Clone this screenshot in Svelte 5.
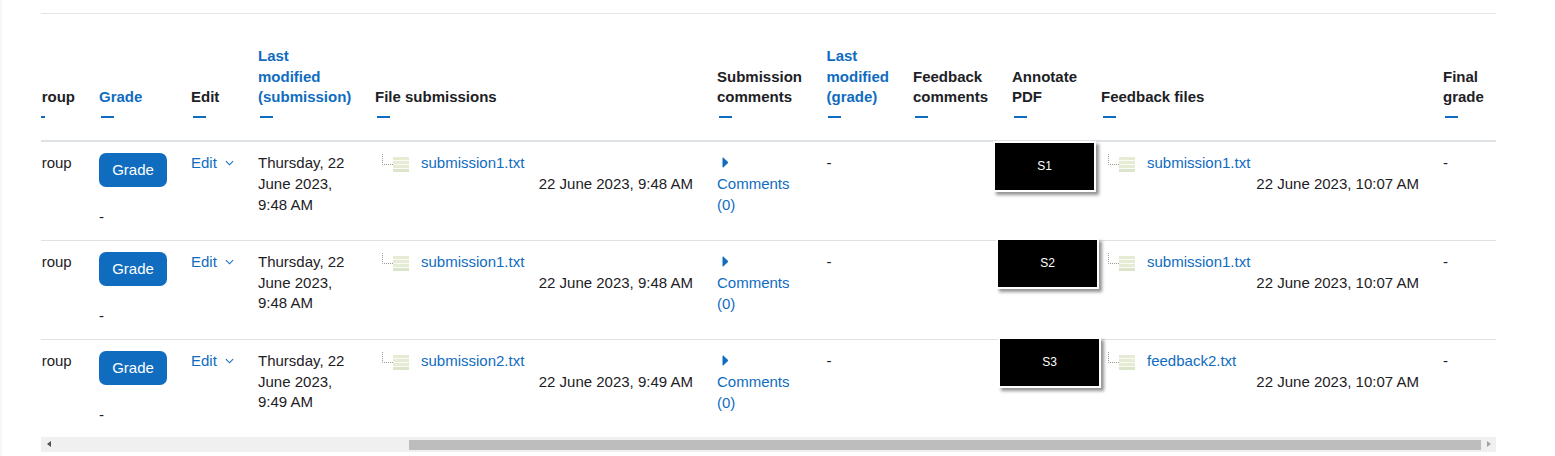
<script>
  const rows = [
    { mod: "9:48 AM", file: "submission1.txt", time: "9:48 AM", label: "S1", shift: 0, top: -1, feedback: "submission1.txt" },
    { mod: "9:48 AM", file: "submission1.txt", time: "9:48 AM", label: "S2", shift: 3, top: -3, feedback: "submission1.txt" },
    { mod: "9:49 AM", file: "submission2.txt", time: "9:49 AM", label: "S3", shift: 5, top: -3, feedback: "feedback2.txt" }
  ];
  const widths = [68, 92, 67, 117, 342, 109.5, 86.5, 99, 89, 342, 80];
</script>

{#snippet collapse()}
  <span class="collapse"></span>
{/snippet}

{#snippet fileEntry(name, date)}
  <div class="tree">
    <svg class="tree-icon" viewBox="0 0 28 20" width="28" height="20" aria-hidden="true">
      <path d="M0.5 0v10.5H11" fill="none" stroke="#999" stroke-dasharray="1 1" />
      <rect x="11" y="3" width="16" height="15" fill="#e6ecd3" />
      <path d="M11 6.5h16M11 10.5h16M11 14.5h16" stroke="#fff" stroke-opacity="0.8" />
      <rect x="11" y="15" width="16" height="3" fill="#dbe5c9" />
    </svg>
    <a href="#top">{name}</a>
  </div>
  <div class="file-date">{date}</div>
{/snippet}

<div class="page">
  <div class="panel">
    <div class="scroller">
      <table>
        <colgroup>
          {#each widths as w}
            <col style="width: {w}px" />
          {/each}
        </colgroup>
        <thead>
          <tr>
            <th>Group{@render collapse()}</th>
            <th><a href="#top">Grade</a>{@render collapse()}</th>
            <th>Edit{@render collapse()}</th>
            <th><a href="#top">Last<br />modified<br />(submission)</a>{@render collapse()}</th>
            <th>File submissions{@render collapse()}</th>
            <th>Submission<br />comments{@render collapse()}</th>
            <th><a href="#top">Last<br />modified<br />(grade)</a>{@render collapse()}</th>
            <th>Feedback<br />comments{@render collapse()}</th>
            <th>Annotate<br />PDF{@render collapse()}</th>
            <th>Feedback files{@render collapse()}</th>
            <th>Final<br />grade{@render collapse()}</th>
          </tr>
        </thead>
        <tbody>
          {#each rows as row}
            <tr>
              <td>Group</td>
              <td>
                <button>Grade</button>
                <div class="grade-value">-</div>
              </td>
              <td>
                <a href="#top" class="edit">Edit
                  <svg viewBox="0 0 10 6" width="9" height="6" aria-hidden="true">
                    <path d="M1 1l4 4 4-4" fill="none" stroke="#0f6cbf" stroke-width="1.2" />
                  </svg>
                </a>
              </td>
              <td>Thursday, 22<br />June 2023,<br />{row.mod}</td>
              <td>{@render fileEntry(row.file, `22 June 2023, ${row.time}`)}</td>
              <td>
                <svg class="arrow" viewBox="0 0 7 11" width="7" height="11" aria-hidden="true">
                  <path d="M1 0.8L6 5.5L1 10.2Z" fill="#0f6cbf" stroke="#0f6cbf" stroke-linejoin="round" />
                </svg>
                <a href="#top" class="comments">Comments (0)</a>
              </td>
              <td>-</td>
              <td></td>
              <td class="annotate">
                <div class="thumb" style="margin-left: {row.shift}px; top: {row.top}px">{row.label}</div>
              </td>
              <td>{@render fileEntry(row.feedback, "22 June 2023, 10:07 AM")}</td>
              <td>-</td>
            </tr>
          {/each}
        </tbody>
      </table>
    </div>
    <div class="scrollbar">
      <span class="step left"></span>
      <div class="track"><div class="bar"></div></div>
      <span class="step right"></span>
    </div>
  </div>
</div>

<style>
  :global(body) {
    margin: 0;
    background: #fff;
  }

  .page {
    height: 456px;
    box-sizing: border-box;
    border-left: 2px solid #f8f8f8;
    padding: 13px 59px 0 39px;
    font-family: "Liberation Sans", Arial, sans-serif;
    font-size: 15px;
    line-height: 20.6px;
    color: #1d2125;
    overflow: hidden;
  }

  .panel {
    border-top: 1px solid #e3e6e8;
  }

  .scroller {
    overflow: hidden;
    padding-top: 32px;
  }

  table {
    table-layout: fixed;
    border-collapse: collapse;
    width: 1492px;
    margin-left: -19px;
  }

  a {
    color: #0f6cbf;
    text-decoration: none;
  }

  th {
    text-align: left;
    vertical-align: bottom;
    font-weight: 700;
    padding: 0 9px 21.6px;
    border-bottom: 2px solid #dee2e6;
    white-space: nowrap;
  }

  th:first-child,
  td:first-child {
    padding-left: 8px;
  }

  .collapse {
    display: block;
    width: 13px;
    height: 2px;
    margin: 8.6px 0 0 1.5px;
    background: #0f6cbf;
  }

  td {
    vertical-align: top;
    padding: 11.5px 9px 0;
    height: 86.3px;
    border-bottom: 1px solid #dee2e6;
  }

  tbody tr:last-child td {
    border-bottom: none;
  }

  button {
    display: block;
    width: 68px;
    height: 34px;
    padding: 0;
    border: none;
    border-radius: 7px;
    background: #0f6cbf;
    color: #fff;
    font: inherit;
    margin-bottom: 20px;
  }

  .grade-value {
    line-height: 20px;
  }

  .edit svg {
    margin-left: 4px;
    vertical-align: 2px;
  }

  .tree {
    display: flex;
    align-items: flex-start;
    padding-left: 7px;
    gap: 11px;
  }

  .tree-icon {
    flex: none;
    margin-top: 0.5px;
  }

  .file-date {
    text-align: right;
    padding-right: 6px;
  }

  .arrow {
    display: block;
    margin: 3.5px 0 6.5px 5px;
  }

  .comments {
    display: block;
    width: 80px;
  }

  td.annotate {
    position: relative;
    overflow: visible;
  }

  .thumb {
    position: absolute;
    left: -10px;
    width: 99px;
    height: 47px;
    box-sizing: content-box;
    border: 2px solid #fff;
    background: #000;
    color: #fff;
    font-size: 12px;
    line-height: 47px;
    text-align: center;
    box-shadow: 3px 3px 3px rgba(60, 60, 60, 0.55);
    z-index: 1;
  }

  .scrollbar {
    display: flex;
    height: 15px;
    background: #f0f0f0;
  }

  .step {
    flex: none;
    width: 15px;
    position: relative;
  }

  .step::after {
    content: "";
    position: absolute;
    top: 4px;
    border-style: solid;
    border-width: 3.5px 4px;
    border-color: transparent;
  }

  .left::after {
    left: 2px;
    border-right-color: #505050;
  }

  .right::after {
    right: 1px;
    border-left-color: #a3a3a3;
  }

  .track {
    flex: 1;
    padding: 3px 0 2px 353px;
  }

  .bar {
    height: 10px;
    background: #bdbdbd;
  }
</style>
